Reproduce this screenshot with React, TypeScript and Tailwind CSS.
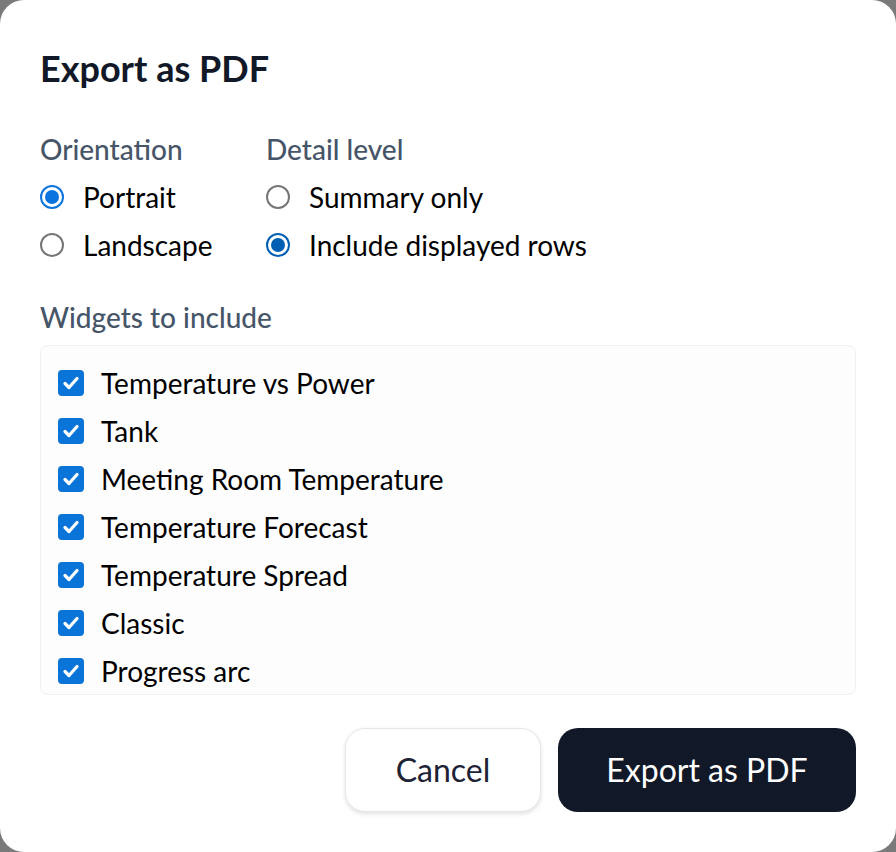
import { useState } from "react";

const widgets = [
  "Temperature vs Power",
  "Tank",
  "Meeting Room Temperature",
  "Temperature Forecast",
  "Temperature Spread",
  "Classic",
  "Progress arc",
];

const Radio = ({ checked, label, bright, onClick }: { checked: boolean; label: string; bright?: boolean; onClick: () => void }) => (
  <button type="button" onClick={onClick} className="flex items-center h-12 gap-[19px] text-left">
    <span
      className={`w-6 h-6 rounded-full border-2 flex items-center justify-center ${
        checked ? (bright ? "border-[#0b74de]" : "border-[#005fb3]") : "border-[#767676]"
      }`}
    >
      {checked && <span className={`w-[14px] h-[14px] rounded-full ${bright ? "bg-[#0b74de]" : "bg-[#005fb3]"}`} />}
    </span>
    <span className="text-[28px] leading-[30px] text-black">{label}</span>
  </button>
);

const App = () => {
  const [orientation, setOrientation] = useState("portrait");
  const [detail, setDetail] = useState("rows");
  const [selected, setSelected] = useState<string[]>(widgets);

  const toggle = (w: string) =>
    setSelected((s) => (s.includes(w) ? s.filter((x) => x !== w) : [...s, w]));

  return (
    <div className="w-[896px] h-[852px] bg-[#7a7a7a]" style={{ fontFamily: "Lato, 'Noto Sans', sans-serif" }}>
      <div className="w-full h-full bg-white rounded-[24px] px-10 pt-12">
        <h1 className="text-[36px] leading-[40px] font-bold text-[#111827]">Export as PDF</h1>

        <div className="flex mt-[45px]">
          <div className="w-[226px]">
            <div className="text-[28px] leading-8 font-medium text-[#475569]">Orientation</div>
            <div className="mt-2 flex flex-col">
              <Radio checked={orientation === "portrait"} bright label="Portrait" onClick={() => setOrientation("portrait")} />
              <Radio checked={orientation === "landscape"} bright label="Landscape" onClick={() => setOrientation("landscape")} />
            </div>
          </div>
          <div>
            <div className="text-[28px] leading-8 font-medium text-[#475569]">Detail level</div>
            <div className="mt-2 flex flex-col">
              <Radio checked={detail === "summary"} label="Summary only" onClick={() => setDetail("summary")} />
              <Radio checked={detail === "rows"} label="Include displayed rows" onClick={() => setDetail("rows")} />
            </div>
          </div>
        </div>

        <div className="mt-8 text-[28px] leading-8 font-medium text-[#475569]">Widgets to include</div>
        <div className="mt-3 h-[350px] overflow-hidden rounded-lg border border-[#f0f0f5] bg-[#fdfdfe] pl-[17px] pt-[13px]">
          {widgets.map((w) => {
            const on = selected.includes(w);
            return (
              <label key={w} className="flex items-center h-12 gap-[17px] cursor-pointer" onClick={() => toggle(w)}>
                <span
                  className={`w-[26px] h-[26px] rounded-[4px] flex items-center justify-center ${
                    on ? "bg-[#0b74d9]" : "border-2 border-[#767676] bg-white"
                  }`}
                >
                  {on && (
                    <svg width="20" height="20" viewBox="0 0 20 20" fill="none">
                      <path d="M4 10.5l4 4 8-9" stroke="white" strokeWidth="3.2" strokeLinecap="round" strokeLinejoin="round" />
                    </svg>
                  )}
                </span>
                <span className="text-[28px] leading-[30px] text-black">{w}</span>
              </label>
            );
          })}
        </div>

        <div className="mt-[33px] flex justify-end gap-[17px]">
          <button className="w-[196px] h-[84px] rounded-[20px] border border-[#e5e7eb] bg-white shadow-[0_2px_4px_rgba(0,0,0,0.12)] text-[32px] text-[#1e2235]">
            Cancel
          </button>
          <button className="w-[298px] h-[84px] rounded-[20px] bg-[#111827] text-[32px] text-white">
            Export as PDF
          </button>
        </div>
      </div>
    </div>
  );
};

export default App;
